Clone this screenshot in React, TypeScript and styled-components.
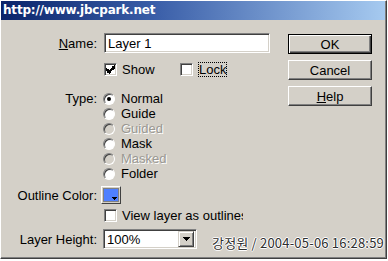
import React from "react";
import styled, { createGlobalStyle } from "styled-components";

const Global = createGlobalStyle`
  html, body { margin: 0; padding: 0; background: #ffffff; }
  body { font-family: "Liberation Sans", Arial, sans-serif; font-size: 13px; line-height: 15px; color: #000; }
  * { box-sizing: border-box; }
`;

const Window = styled.div`
  position: relative;
  width: 387px;
  height: 259px;
  background: #d4d0c8;
  border-top: 1px solid #ffffff;
  border-left: 1px solid #ffffff;
  border-right: 1px solid #404040;
  border-bottom: 1px solid #404040;
  box-shadow: inset -1px -1px 0 #808080;
  display: flex;
  flex-direction: column;
`;

const TitleBar = styled.div`
  height: 19px;
  margin-right: 1px;
  background: linear-gradient(to right, #0a246a 0%, #3a5ea8 40%, #a6caf0 100%);
  display: flex;
  align-items: center;
  padding-left: 2px;
`;

const Title = styled.span`
  color: #ffffff;
  font-family: "DejaVu Sans", sans-serif;
  font-weight: bold;
  font-size: 12px;
  letter-spacing: -0.2px;
`;

const Body = styled.div`
  display: flex;
  padding-top: 13px;
`;

const Form = styled.div`
  width: 287px;
  display: flex;
  flex-direction: column;
`;

const Row = styled.div<{ $mt?: number; $gap?: number; $top?: boolean }>`
  display: flex;
  align-items: ${(p) => (p.$top ? "flex-start" : "center")};
  margin-top: ${(p) => p.$mt ?? 0}px;
  gap: ${(p) => p.$gap ?? 7}px;
`;

const Label = styled.label`
  width: 96px;
  text-align: right;
  line-height: 15px;
  white-space: nowrap;
  u { text-decoration: underline; }
`;

const TextInput = styled.div`
  width: 166px;
  height: 20px;
  background: #ffffff;
  border-top: 1px solid #808080;
  border-left: 1px solid #808080;
  border-right: 1px solid #ffffff;
  border-bottom: 1px solid #ffffff;
  box-shadow: inset 1px 1px 0 #404040, inset -1px -1px 0 #d4d0c8;
  padding: 0 3px;
  display: flex;
  align-items: center;
`;

const CheckGroup = styled.div<{ $width?: number }>`
  display: flex;
  align-items: center;
  gap: 5px;
  width: ${(p) => (p.$width ? `${p.$width}px` : "auto")};
  white-space: nowrap;
  overflow: hidden;
`;

const Box = styled.span`
  flex: none;
  width: 13px;
  height: 13px;
  background: #ffffff;
  border-top: 1px solid #808080;
  border-left: 1px solid #808080;
  border-right: 1px solid #ffffff;
  border-bottom: 1px solid #ffffff;
  box-shadow: inset 1px 1px 0 #404040, inset -1px -1px 0 #d4d0c8;
  display: flex;
  align-items: center;
  justify-content: center;
`;

const Focus = styled.span`
  outline: 1px dotted #000;
  outline-offset: -1px;
  line-height: 15px;
  padding: 0 1px;
`;

const RadioList = styled.div`
  display: flex;
  flex-direction: column;
`;

const RadioRow = styled.div<{ $disabled?: boolean }>`
  height: 15px;
  display: flex;
  align-items: center;
  gap: 6px;
  margin-left: -1px;
  color: ${(p) => (p.$disabled ? "#9a9893" : "#000")};
  text-shadow: ${(p) => (p.$disabled ? "1px 1px 0 #ffffff" : "none")};
`;

const Radio = styled.span<{ $disabled?: boolean }>`
  flex: none;
  width: 12px;
  height: 12px;
  border-radius: 50%;
  background: ${(p) => (p.$disabled ? "#d4d0c8" : "#ffffff")};
  border: 1px solid;
  border-color: #808080 #ffffff #ffffff #808080;
  box-shadow: inset 1px 1px 0 #404040;
  display: flex;
  align-items: center;
  justify-content: center;
`;

const Dot = styled.span`
  width: 4px;
  height: 4px;
  border-radius: 50%;
  background: #000;
`;

const Swatch = styled.div`
  position: relative;
  width: 20px;
  height: 18px;
  border-top: 1px solid #ffffff;
  border-left: 1px solid #ffffff;
  border-right: 1px solid #404040;
  border-bottom: 1px solid #404040;
  padding: 1px;
  background: #d4d0c8;
`;

const SwatchFill = styled.div`
  width: 100%;
  height: 100%;
  background: #4f80ff;
  border: 1px solid #808080;
  display: flex;
  align-items: flex-end;
  justify-content: flex-end;
  padding: 0 1px 1px 0;
`;

const Select = styled.div`
  width: 94px;
  height: 20px;
  background: #ffffff;
  border-top: 1px solid #808080;
  border-left: 1px solid #808080;
  border-right: 1px solid #ffffff;
  border-bottom: 1px solid #ffffff;
  box-shadow: inset 1px 1px 0 #404040, inset -1px -1px 0 #d4d0c8;
  padding: 2px;
  display: flex;
  align-items: center;
  justify-content: space-between;
`;

const SelectText = styled.span`
  padding-left: 1px;
`;

const DropButton = styled.span`
  width: 16px;
  height: 16px;
  background: #d4d0c8;
  border-top: 1px solid #d4d0c8;
  border-left: 1px solid #d4d0c8;
  border-right: 1px solid #404040;
  border-bottom: 1px solid #404040;
  box-shadow: inset 1px 1px 0 #ffffff, inset -1px -1px 0 #808080;
  display: flex;
  align-items: center;
  justify-content: center;
`;

const Buttons = styled.div`
  margin-top: 1px;
  display: flex;
  flex-direction: column;
  gap: 6px;
`;

const Button = styled.div<{ $default?: boolean }>`
  width: 84px;
  height: 20px;
  display: flex;
  align-items: center;
  justify-content: center;
  background: #d4d0c8;
  border: 1px solid;
  border-color: ${(p) => (p.$default ? "#000" : "#ffffff #404040 #404040 #ffffff")};
  box-shadow: ${(p) =>
    p.$default
      ? "inset 1px 1px 0 #ffffff, inset -1px -1px 0 #404040, inset -2px -2px 0 #808080"
      : "inset -1px -1px 0 #808080"};
  u { text-decoration: underline; }
`;

const Watermark = styled.div`
  position: absolute;
  left: 211px;
  top: 234px;
  font-family: "Noto Sans CJK KR", "DejaVu Sans", sans-serif;
  font-size: 13px;
  line-height: 16px;
  letter-spacing: 0.2px;
  color: #2e2e2e;
  text-shadow: 1px 0 0 #fff, -1px 0 0 #fff, 0 1px 0 #fff, 0 -1px 0 #fff;
  white-space: nowrap;
`;

const Check = () => (
  <svg width="9" height="9" viewBox="0 0 7 7" shapeRendering="crispEdges">
    <path d="M0 2h1v1h1v1h1v-1h1v-1h1v-1h1v-1h1v3h-1v1h-1v1h-1v1h-1v1h-1v-1h-1v-1h-1z" fill="#000" />
  </svg>
);

const DownArrow = () => (
  <svg width="7" height="4" viewBox="0 0 7 4" shapeRendering="crispEdges">
    <path d="M0 0h7v1h-1v1h-1v1h-1v1h-1v-1h-1v-1h-1v-1h-1z" fill="#000" />
  </svg>
);

const SmallArrow = () => (
  <svg width="5" height="3" viewBox="0 0 5 3" shapeRendering="crispEdges">
    <path d="M0 0h5v1h-1v1h-1v1h-1v-1h-1v-1h-1z" fill="#000" />
  </svg>
);

const types = [
  { label: "Normal", checked: true },
  { label: "Guide" },
  { label: "Guided", disabled: true },
  { label: "Mask" },
  { label: "Masked", disabled: true },
  { label: "Folder" },
];

export default function App() {
  return (
    <>
      <Global />
      <Window>
        <TitleBar>
          <Title>http://www.jbcpark.net</Title>
        </TitleBar>
        <Body>
          <Form>
            <Row>
              <Label>
                <u>N</u>ame:
              </Label>
              <TextInput>Layer 1</TextInput>
            </Row>
            <Row $mt={9}>
              <Label />
              <CheckGroup $width={69}>
                <Box>
                  <Check />
                </Box>
                <span>Show</span>
              </CheckGroup>
              <CheckGroup>
                <Box />
                <Focus>Lock</Focus>
              </CheckGroup>
            </Row>
            <Row $mt={14} $top>
              <Label>Type:</Label>
              <RadioList>
                {types.map((t) => (
                  <RadioRow key={t.label} $disabled={t.disabled}>
                    <Radio $disabled={t.disabled}>{t.checked && <Dot />}</Radio>
                    <span>{t.label}</span>
                  </RadioRow>
                ))}
              </RadioList>
            </Row>
            <Row $mt={5} $gap={4}>
              <Label>Outline Color:</Label>
              <Swatch>
                <SwatchFill>
                  <SmallArrow />
                </SwatchFill>
              </Swatch>
            </Row>
            <Row $mt={4}>
              <Label />
              <CheckGroup $width={139}>
                <Box />
                <span>View layer as outlines</span>
              </CheckGroup>
            </Row>
            <Row $mt={6} $gap={6}>
              <Label>Layer Height:</Label>
              <Select>
                <SelectText>100%</SelectText>
                <DropButton>
                  <DownArrow />
                </DropButton>
              </Select>
            </Row>
          </Form>
          <Buttons>
            <Button $default>OK</Button>
            <Button>Cancel</Button>
            <Button>
              <u>H</u>elp
            </Button>
          </Buttons>
        </Body>
        <Watermark>강정원 / 2004-05-06 16:28:59</Watermark>
      </Window>
    </>
  );
}
